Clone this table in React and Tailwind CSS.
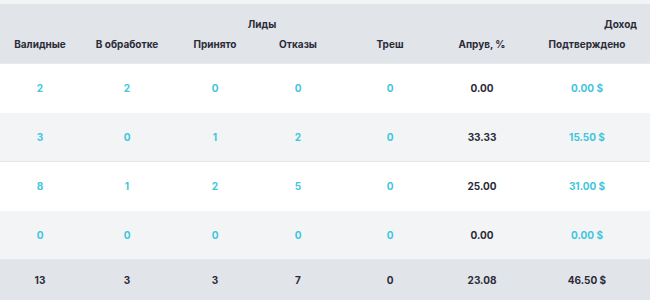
const rows = [
  { v: 2, p: 2, a: 0, r: 0, t: 0, ap: "0.00", c: "0.00 $" },
  { v: 3, p: 0, a: 1, r: 2, t: 0, ap: "33.33", c: "15.50 $" },
  { v: 8, p: 1, a: 2, r: 5, t: 0, ap: "25.00", c: "31.00 $" },
  { v: 0, p: 0, a: 0, r: 0, t: 0, ap: "0.00", c: "0.00 $" },
];

const cols = "grid grid-cols-[80px_94px_82px_84px_100px_84px_126px]";

export default function App() {
  return (
    <div className="w-[650px] h-[300px] overflow-hidden bg-[#f3f4f6] pt-[4px] font-['Inter',sans-serif] text-[10px] font-bold">
      <div className="bg-[#e1e4e9] h-[60px] text-[#2b2b38] border-b border-[#e8eaee]">
        <div className={`${cols} h-[28px] items-end`}>
          <div className="col-span-6 text-center">Лиды</div>
          <div className="text-right pr-[13px]">Доход</div>
        </div>
        <div className={`${cols} h-[24px] items-center text-center`}>
          <div>Валидные</div>
          <div>В обработке</div>
          <div>Принято</div>
          <div>Отказы</div>
          <div>Треш</div>
          <div>Апрув, %</div>
          <div>Подтверждено</div>
        </div>
      </div>
      {rows.map((r, i) => (
        <div
          key={i}
          className={`${cols} h-[49px] items-center text-center text-[#3fc6dc] ${
            i % 2 ? "bg-[#f3f4f6] border-b border-[#e3e8ef]" : "bg-white"
          }`}
        >
          <div>{r.v}</div>
          <div>{r.p}</div>
          <div>{r.a}</div>
          <div>{r.r}</div>
          <div>{r.t}</div>
          <div className="text-[#2b2b38]">{r.ap}</div>
          <div>{r.c}</div>
        </div>
      ))}
      <div className={`${cols} h-[41px] items-center text-center bg-[#e1e4e9] text-[#2b2b38]`}>
        <div>13</div>
        <div>3</div>
        <div>3</div>
        <div>7</div>
        <div>0</div>
        <div>23.08</div>
        <div>46.50 $</div>
      </div>
    </div>
  );
}
